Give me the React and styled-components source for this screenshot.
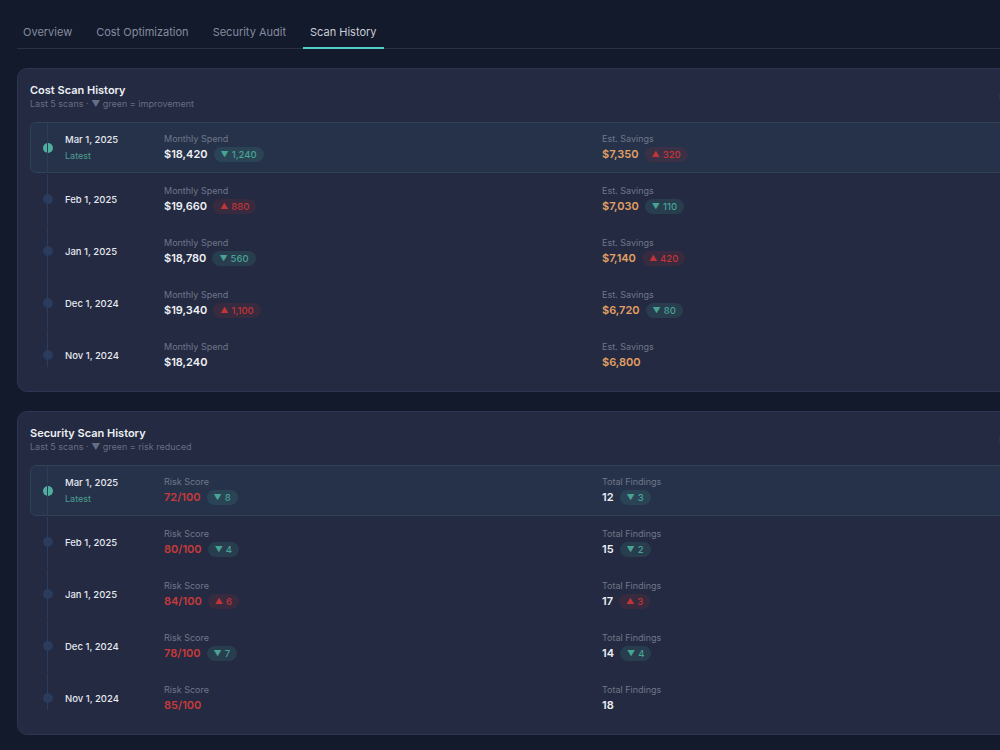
import React from "react";
import styled, { createGlobalStyle } from "styled-components";

const GlobalStyle = createGlobalStyle`
  html, body {
    margin: 0;
    padding: 0;
    background: #131a2c;
    overflow: hidden;
  }
  body {
    font-family: Inter, "Noto Sans", "Liberation Sans", sans-serif;
    color: #e8eaf0;
    -webkit-font-smoothing: antialiased;
  }
`;

const tabs = ["Overview", "Cost Optimization", "Security Audit", "Scan History"];

const costScans = [
  { date: "Mar 1, 2025", latest: true, a: "$18,420", aDelta: { dir: "down", v: "1,240" }, b: "$7,350", bDelta: { dir: "up", v: "320" } },
  { date: "Feb 1, 2025", a: "$19,660", aDelta: { dir: "up", v: "880" }, b: "$7,030", bDelta: { dir: "down", v: "110" } },
  { date: "Jan 1, 2025", a: "$18,780", aDelta: { dir: "down", v: "560" }, b: "$7,140", bDelta: { dir: "up", v: "420" } },
  { date: "Dec 1, 2024", a: "$19,340", aDelta: { dir: "up", v: "1,100" }, b: "$6,720", bDelta: { dir: "down", v: "80" } },
  { date: "Nov 1, 2024", a: "$18,240", b: "$6,800" },
];

const securityScans = [
  { date: "Mar 1, 2025", latest: true, a: "72/100", aDelta: { dir: "down", v: "8" }, b: "12", bDelta: { dir: "down", v: "3" } },
  { date: "Feb 1, 2025", a: "80/100", aDelta: { dir: "down", v: "4" }, b: "15", bDelta: { dir: "down", v: "2" } },
  { date: "Jan 1, 2025", a: "84/100", aDelta: { dir: "up", v: "6" }, b: "17", bDelta: { dir: "up", v: "3" } },
  { date: "Dec 1, 2024", a: "78/100", aDelta: { dir: "down", v: "7" }, b: "14", bDelta: { dir: "down", v: "4" } },
  { date: "Nov 1, 2024", a: "85/100", b: "18" },
];

export default function App() {
  return (
    <>
      <GlobalStyle />
      <Page>
        <TabBar>
          {tabs.map((t) => (
            <Tab key={t} $active={t === "Scan History"}>
              {t}
            </Tab>
          ))}
        </TabBar>

        <HistoryCard
          title="Cost Scan History"
          subtitle="Last 5 scans · ▼ green = improvement"
          labelA="Monthly Spend"
          labelB="Est. Savings"
          toneA="plain"
          toneB="orange"
          scans={costScans}
        />
        <HistoryCard
          title="Security Scan History"
          subtitle="Last 5 scans · ▼ green = risk reduced"
          labelA="Risk Score"
          labelB="Total Findings"
          toneA="red"
          toneB="plain"
          scans={securityScans}
        />
      </Page>
    </>
  );
}

function HistoryCard({ title, subtitle, labelA, labelB, toneA, toneB, scans }) {
  return (
    <Card>
      <CardHeader>
        <div>
          <CardTitle>{title}</CardTitle>
          <CardSub>{subtitle}</CardSub>
        </div>
        <CountPill>5 scans</CountPill>
      </CardHeader>
      <List>
        {scans.map((s, i) => (
          <Row key={s.date} $latest={s.latest}>
            <DotCell $last={i === scans.length - 1}>
              <Dot $latest={s.latest} />
            </DotCell>
            <DateCell>
              <DateText>{s.date}</DateText>
              {s.latest && <LatestTag>Latest</LatestTag>}
            </DateCell>
            <Metric label={labelA} value={s.a} tone={toneA} delta={s.aDelta} />
            <Metric label={labelB} value={s.b} tone={toneB} delta={s.bDelta} />
          </Row>
        ))}
      </List>
    </Card>
  );
}

function Metric({ label, value, tone, delta }) {
  return (
    <MetricCell>
      <MetricLabel>{label}</MetricLabel>
      <ValueLine>
        <Value $tone={tone}>{value}</Value>
        {delta && (
          <Delta $dir={delta.dir}>
            <Arrow>{delta.dir === "down" ? "▼" : "▲"}</Arrow>
            {delta.v}
          </Delta>
        )}
      </ValueLine>
    </MetricCell>
  );
}

const Page = styled.div`
  width: 1048px;
  padding: 14px 17px 20px;
  display: flex;
  flex-direction: column;
  gap: 19px;
`;

const TabBar = styled.div`
  display: flex;
  gap: 10px;
  border-bottom: 1px solid #2a3147;
`;

const Tab = styled.div`
  padding: 11px 7px 8px;
  margin-bottom: -1px;
  font-size: 11px;
  line-height: 14px;
  color: ${(p) => (p.$active ? "#c9ced9" : "#858c9f")};
  border-bottom: 2px solid ${(p) => (p.$active ? "#4fd1c5" : "transparent")};
  &:first-child {
    margin-left: -1px;
  }
`;

const Card = styled.div`
  background: #232a42;
  border: 1px solid #2d3552;
  border-radius: 10px;
  padding: 14px 12px 10px;
`;

const CardHeader = styled.div`
  display: flex;
  justify-content: space-between;
  align-items: flex-start;
  margin-bottom: 12px;
`;

const CardTitle = styled.div`
  font-size: 11px;
  font-weight: 600;
  line-height: 14px;
  color: #eef0f4;
`;

const CardSub = styled.div`
  font-size: 9px;
  line-height: 12px;
  color: #666e84;
  margin-top: 1px;
`;

const CountPill = styled.div`
  margin-top: 5px;
  padding: 3px 10px;
  border-radius: 10px;
  background: rgba(79, 209, 197, 0.1);
  color: #4fb3a3;
  font-size: 9px;
  font-weight: 500;
`;

const List = styled.div`
  display: flex;
  flex-direction: column;
`;

const Row = styled.div`
  display: grid;
  grid-template-columns: 34px 99px 438px 1fr;
  align-items: center;
  height: ${(p) => (p.$latest ? "51px" : "52px")};
  box-sizing: border-box;
  border: 1px solid ${(p) => (p.$latest ? "#2f4354" : "transparent")};
  border-radius: 6px;
  background: ${(p) => (p.$latest ? "#26324a" : "transparent")};
`;

const DotCell = styled.div`
  position: relative;
  align-self: stretch;
  display: flex;
  align-items: center;
  justify-content: center;
  &::before {
    content: "";
    position: absolute;
    left: 16px;
    top: 0;
    bottom: ${(p) => (p.$last ? "13px" : "-1px")};
    width: 1px;
    background: #2b3d5a;
    z-index: 1;
  }
`;

const Dot = styled.span`
  width: 10px;
  height: 10px;
  border-radius: 50%;
  margin-left: -1px;
  background: ${(p) => (p.$latest ? "#4fae9d" : "#2a3b5c")};
`;

const DateCell = styled.div`
  display: flex;
  flex-direction: column;
  gap: 5px;
`;

const DateText = styled.div`
  font-size: 9.5px;
  font-weight: 500;
  color: #e6e8ee;
`;

const LatestTag = styled.div`
  font-size: 9px;
  color: #4a9e8f;
`;

const MetricCell = styled.div`
  display: flex;
  flex-direction: column;
  gap: 2px;
`;

const MetricLabel = styled.div`
  font-size: 9px;
  line-height: 12px;
  color: #6f7689;
`;

const toneColor = {
  plain: "#eef0f4",
  orange: "#e3a062",
  red: "#c83a3a",
};

const ValueLine = styled.div`
  display: flex;
  align-items: center;
  gap: 6px;
`;

const Value = styled.div`
  font-size: 11px;
  font-weight: 600;
  line-height: 15px;
  color: ${(p) => toneColor[p.$tone]};
`;

const Delta = styled.span`
  display: inline-flex;
  align-items: center;
  gap: 3px;
  padding: 2px 7px;
  border-radius: 8px;
  font-size: 9.5px;
  font-weight: 500;
  line-height: 11px;
  color: ${(p) => (p.$dir === "down" ? "#47a394" : "#c03636")};
  background: ${(p) => (p.$dir === "down" ? "rgba(72, 175, 158, 0.14)" : "rgba(200, 50, 50, 0.13)")};
`;

const Arrow = styled.span`
  font-size: 8px;
`;
